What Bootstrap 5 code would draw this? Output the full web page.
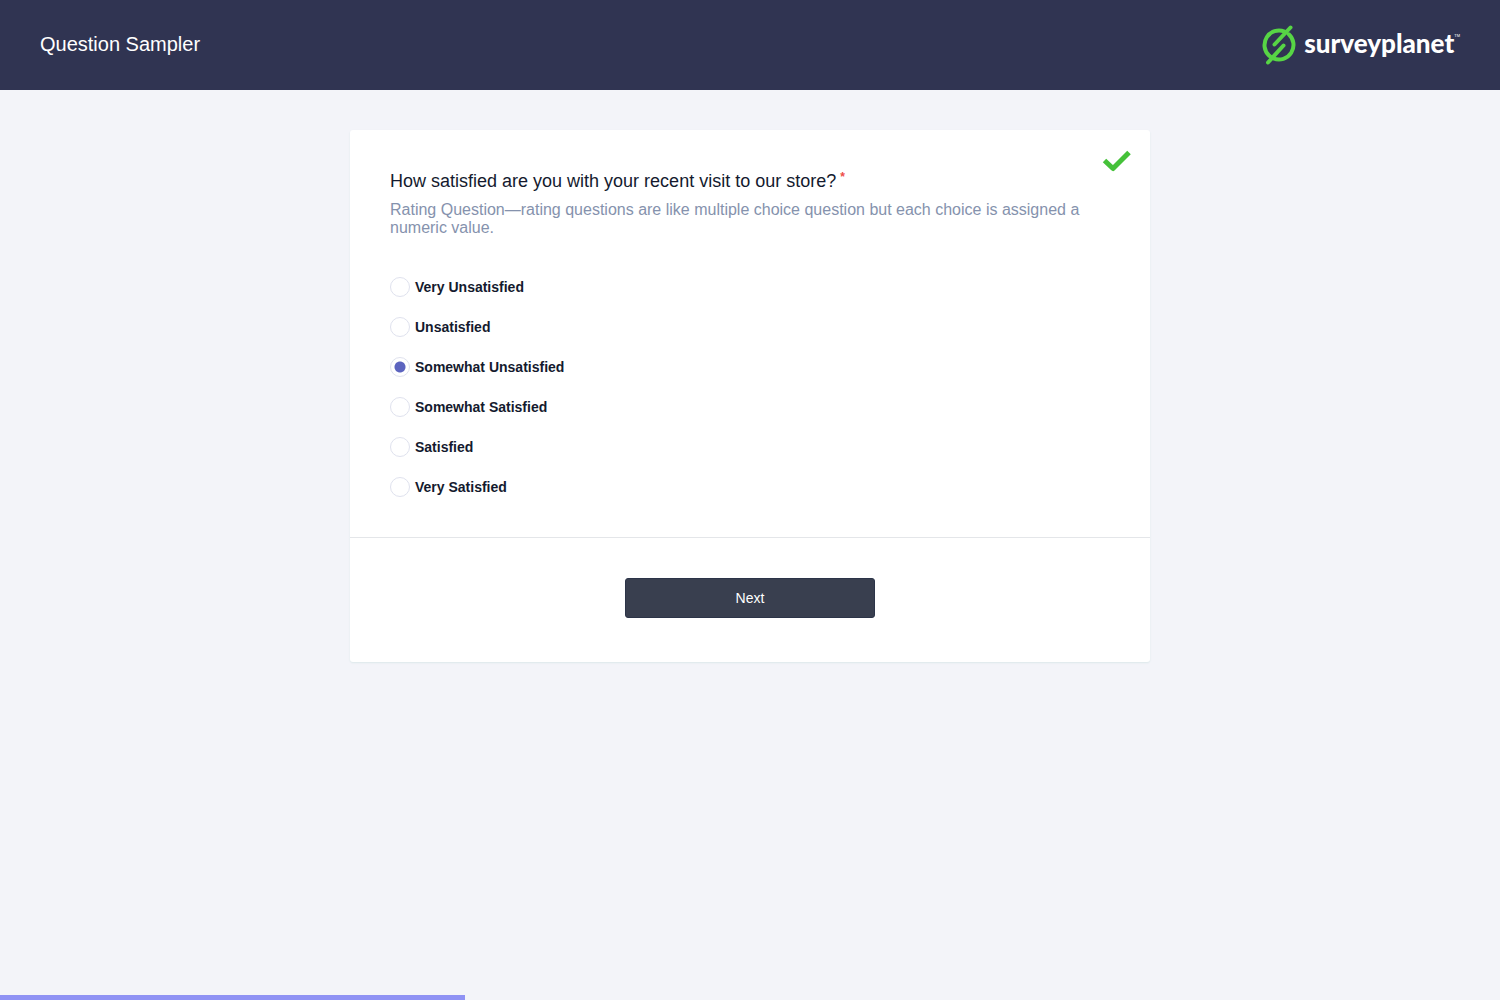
<!DOCTYPE html>
<html lang="en">
<head>
<meta charset="utf-8">
<meta name="viewport" content="width=device-width, initial-scale=1">
<title>Question Sampler</title>
<link href="https://cdn.jsdelivr.net/npm/bootstrap@5.3.0/dist/css/bootstrap.min.css" rel="stylesheet">
<style>
  body { background: #f3f4f9; color: #141a2e; font-family: "Liberation Sans", Arial, sans-serif; font-size: 14px; }
  .survey-header { background: #303452; min-height: 90px; padding: 0 40px; }
  .survey-title { font-size: 20px; line-height: 24px; padding-bottom: 2px; color: #fff; }
  .brand-name { font-family: Lato, "Open Sans", sans-serif; font-weight: 900; font-size: 26px; line-height: 30px; padding-bottom: 4px; color: #fff; }
  .brand-tm { font-size: 4px; line-height: 24px; color: #fff; }
  .survey-card { max-width: 800px; border-radius: 3px; box-shadow: 0 1px 2px #dce8ea; }
  .question-body { padding: 40px 40px 30px; }
  .question-title { font-size: 18px; line-height: 22px; font-weight: 400; margin-bottom: 9px; }
  .required-star { color: #ee4d48; font-size: 12px; line-height: 12px; font-weight: 700; }
  .question-help { font-size: 16px; line-height: 18px; margin-bottom: 30px; color: #8592ad; }
  .done-mark { top: 20px; right: 18px; }
  .choice { min-height: 40px; }
  .choice .form-check-input { width: 20px; height: 20px; border: 1px solid #dfe2ee; background-image: none; box-shadow: none; }
  .choice .form-check-input:checked { background: radial-gradient(circle, #5c64bf 5px, #fff 6px); }
  .choice label { font-weight: 700; line-height: 20px; padding-left: 5px; }
  .question-footer { border-top: 1px solid #e4e6e9; padding: 40px 40px 44px; }
  .next-btn { width: 250px; height: 40px; padding: 0; font-size: 14px; color: #fff; background: #393f4f; border: 1px solid #2c3448; border-radius: 3px; }
  .next-btn:hover { color: #fff; background: #2c3448; }
  .survey-progress { height: 5px; background: transparent; border-radius: 0; }
  .survey-progress .progress-bar { background: #8f92f4; }
</style>
<script src="https://cdn.jsdelivr.net/npm/bootstrap@5.3.0/dist/js/bootstrap.bundle.min.js"></script>
</head>
<body class="min-vh-100 d-flex flex-column">
<header class="survey-header d-flex align-items-center justify-content-between">
  <h1 class="survey-title fw-normal mb-0">Question Sampler</h1>
  <a href="#" class="d-flex align-items-center text-decoration-none" aria-label="surveyplanet">
    <svg class="me-2" width="34" height="42" viewBox="0 0 34 42" fill="none" stroke="#57d545" stroke-width="4" stroke-linecap="round" aria-hidden="true">
      <path d="M22.500 7.600A14.500 14.500 0 0 0 7.200 31.700M26.800 10.300A14.500 14.500 0 0 1 11.500 34.400M22.500 7.600L24 8.200M7.200 31.700L9 33"/>
      <path d="M28.500 3.500L12.500 20.500M6 38.500L21.500 21.500"/>
    </svg>
    <span class="brand-name">surveyplanet</span><span class="brand-tm align-self-start">TM</span>
  </a>
</header>

<main class="flex-grow-1 px-3 py-4">
  <form class="survey-card bg-white mx-auto mt-3 position-relative">
    <svg class="done-mark position-absolute" width="30" height="24" viewBox="0 0 30 24" fill="none" stroke="#45c139" stroke-width="5" stroke-linejoin="round" role="img" aria-label="Answered">
      <path d="M2.500 10.500L11 18.500L27 2.500"/>
    </svg>
    <div class="question-body">
      <h2 class="question-title">How satisfied are you with your recent visit to our store?<sup class="required-star ms-1">*</sup></h2>
      <p class="question-help">Rating Question—rating questions are like multiple choice question but each choice is assigned a numeric value.</p>
      <div role="radiogroup" aria-label="Satisfaction">
        <div class="choice d-flex align-items-center"><input class="form-check-input m-0" type="radio" name="rating" id="r1"><label for="r1">Very Unsatisfied</label></div>
        <div class="choice d-flex align-items-center"><input class="form-check-input m-0" type="radio" name="rating" id="r2"><label for="r2">Unsatisfied</label></div>
        <div class="choice d-flex align-items-center"><input class="form-check-input m-0" type="radio" name="rating" id="r3" checked><label for="r3">Somewhat Unsatisfied</label></div>
        <div class="choice d-flex align-items-center"><input class="form-check-input m-0" type="radio" name="rating" id="r4"><label for="r4">Somewhat Satisfied</label></div>
        <div class="choice d-flex align-items-center"><input class="form-check-input m-0" type="radio" name="rating" id="r5"><label for="r5">Satisfied</label></div>
        <div class="choice d-flex align-items-center"><input class="form-check-input m-0" type="radio" name="rating" id="r6"><label for="r6">Very Satisfied</label></div>
      </div>
    </div>
    <div class="question-footer text-center">
      <button type="submit" class="btn next-btn">Next</button>
    </div>
  </form>
</main>

<div class="survey-progress progress fixed-bottom" role="progressbar" aria-label="Survey progress" aria-valuenow="31" aria-valuemin="0" aria-valuemax="100">
  <div class="progress-bar" style="width: 31%"></div>
</div>
</body>
</html>
